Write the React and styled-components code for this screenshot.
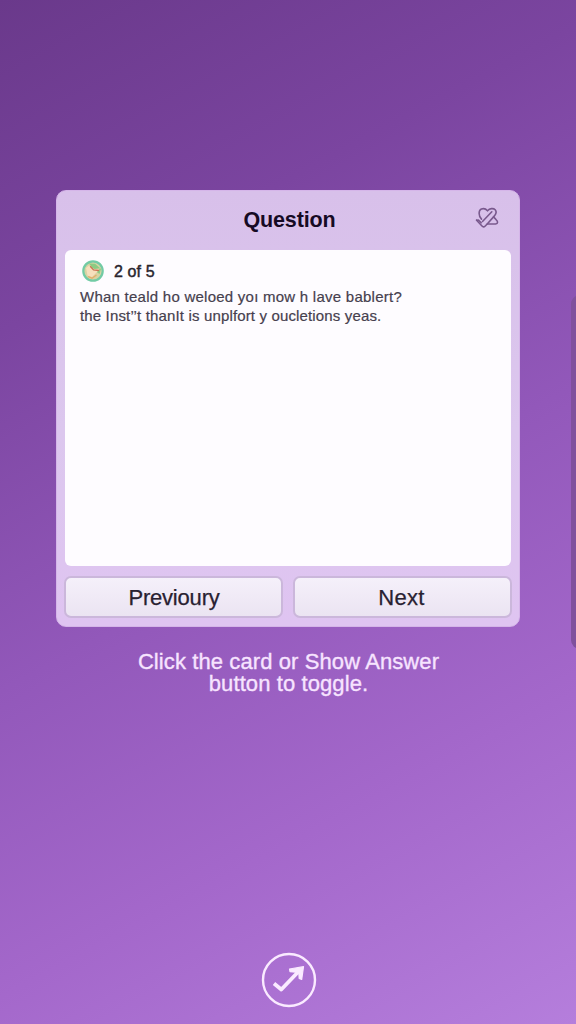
import React from 'react';
import styled, { createGlobalStyle } from 'styled-components';

const GlobalStyle = createGlobalStyle`
  * { box-sizing: border-box; }
  body { margin: 0; }
`;

const Page = styled.main`
  position: relative;
  display: flex;
  flex-direction: column;
  align-items: center;
  width: 100%;
  height: 1024px;
  padding: 190px 56px 16px;
  overflow: hidden;
  font-family: 'Liberation Sans', Arial, sans-serif;
  background: linear-gradient(152deg, #6a398b 0%, #7b45a0 25%, #9258ba 52%, #a468cb 75%, #b57edc 100%);
`;

const Card = styled.section`
  display: flex;
  flex-direction: column;
  width: 464px;
  height: 437px;
  padding: 0 7px 8px;
  border: 1px solid #d5b5e9;
  border-radius: 10px;
  background: linear-gradient(180deg, #d8c0ea 0%, #dcc7ee 55%, #dfc4f1 100%);
`;

const CardHeader = styled.header`
  display: grid;
  grid-template-columns: 32px 1fr 32px;
  align-items: center;
  height: 59px;
`;

const Title = styled.h1`
  grid-column: 2;
  margin: 0 0 0 3px;
  text-align: center;
  font-size: 21.5px;
  font-weight: 700;
  letter-spacing: -0.15px;
  color: #160a24;
`;

const IconButton = styled.button`
  display: flex;
  width: 24px;
  height: 24px;
  padding: 0;
  margin-top: -4px;
  margin-left: -5px;
  border: 0;
  background: none;
  color: #79598d;
`;

const QuestionPanel = styled.div`
  height: 317px;
  margin: 0 1px;
  padding: 8px 15px;
  border-radius: 6px;
  background: #fefcff;
`;

const Progress = styled.div`
  display: flex;
  align-items: center;
  gap: 10px;
  height: 26px;
  padding-left: 2px;
  font-size: 16px;
  letter-spacing: 0.1px;
  color: #29252e;
  -webkit-text-stroke: 0.45px currentColor;
`;

const Count = styled.span`
  padding-top: 2px;
`;

const QuestionText = styled.p`
  margin: 3px 0 0;
  font-size: 15px;
  line-height: 19px;
  color: #46404e;
  -webkit-text-stroke: 0.2px currentColor;
`;

const Line = styled.span`
  display: block;
  white-space: nowrap;
  letter-spacing: ${({ $tracking }) => $tracking}px;
`;

const Actions = styled.footer`
  display: flex;
  gap: 10px;
  margin-top: 10px;
`;

const ActionButton = styled.button`
  flex: 1;
  height: 42px;
  padding: 2px 0 0 1px;
  border: 2px solid #cbb7db;
  border-radius: 7px;
  background: linear-gradient(180deg, #f5f0fa, #ebe4f2);
  font-family: inherit;
  font-size: 22px;
  letter-spacing: ${({ $tracking = 0 }) => $tracking}px;
  text-indent: ${({ $shift = 0 }) => $shift}px;
  color: #282131;
  -webkit-text-stroke: 0.25px currentColor;
`;

const Hint = styled.p`
  margin: 24px 0 0 1px;
  text-align: center;
  font-size: 22px;
  line-height: 22px;
  letter-spacing: 0.1px;
  color: #f7e4ff;
  -webkit-text-stroke: 0.35px currentColor;
`;

const ToggleButton = styled.button`
  display: flex;
  width: 56px;
  height: 56px;
  margin: auto 0 0 2px;
  padding: 0;
  border: 0;
  background: none;
  color: #faeaff;
`;

const SideDrawer = styled.aside`
  position: absolute;
  top: 295px;
  right: -20px;
  width: 25px;
  height: 354px;
  border-radius: 9px;
  background: #80509d;
`;

const HeartPencilIcon = () => (
  <svg width="24" height="24" viewBox="0 0 24 24" fill="none" stroke="currentColor" strokeWidth="1.6" strokeLinecap="round" strokeLinejoin="round">
    <path d="M6.5 13.2C3.5 10.4 3.2 4.4 6.4 3.1C9.3 1.9 11.2 3.3 12.5 4.8C14.8 2.3 18.3 1.9 20.2 3.8C22.2 6.2 20.6 8.7 19 10.4L12.2 18" />
    <path d="M7.5 15.5L16.8 5.8" />
    <path d="M1.6 14.2L7 20Q8.5 21.7 10 20.2L12.2 18H20.5C23.4 17.5 22.8 15 21.2 13.8L18.6 10.9" />
    <path d="M1.6 14.2L3.4 14L6.2 16.8" />
  </svg>
);

const Badge = () => (
  <svg width="22" height="22" viewBox="0 0 22 22">
    <circle cx="11" cy="11" r="9.7" fill="#d8d3a3" stroke="#72cba5" strokeWidth="2.2" />
    <path d="M7 3.5L13 3.8L19 9L17.5 14L12 10Z" fill="#8ccb83" />
    <path d="M4 8L7 5.5L10 8L12.5 9L18 8.5L14.5 12.5L10 17L5.5 15.5Z" fill="#f7dfbd" />
    <path d="M8.2 6.2L11.5 10L17 10.5" fill="none" stroke="#ca7353" strokeWidth="1.3" />
    <path d="M6 16.5L10 18.2L14.5 15" fill="none" stroke="#e5ad6a" strokeWidth="1.3" />
  </svg>
);

const CheckArrowIcon = () => (
  <svg width="56" height="56" viewBox="0 0 56 56" fill="none" stroke="currentColor">
    <circle cx="28" cy="28" r="26" strokeWidth="2.4" />
    <path d="M13 31.5L20.3 37.5L39 18" strokeWidth="3.8" strokeLinejoin="round" />
    <path d="M28.5 17L42.5 14.7L40.7 27.5L38.2 26.5L37.8 20.5L29 19.7Z" fill="currentColor" strokeWidth="1.2" strokeLinejoin="round" />
  </svg>
);

export default function App() {
  return (
    <>
      <GlobalStyle />
      <Page>
        <Card>
          <CardHeader>
            <Title>Question</Title>
            <IconButton aria-label="Edit favorites"><HeartPencilIcon /></IconButton>
          </CardHeader>
          <QuestionPanel>
            <Progress><Badge /><Count>2 of 5</Count></Progress>
            <QuestionText>
              <Line $tracking={0.25}>Whan teald ho weloed yoı mow h lave bablert?</Line>
              <Line $tracking={0.15}>the Inst’’t thanIt is unplfort y oucletions yeas.</Line>
            </QuestionText>
          </QuestionPanel>
          <Actions>
            <ActionButton $tracking={-0.2}>Previoury</ActionButton>
            <ActionButton $tracking={0.3} $shift={-3}>Next</ActionButton>
          </Actions>
        </Card>
        <Hint>Click the card or Show Answer<br />button to toggle.</Hint>
        <ToggleButton aria-label="Toggle answer"><CheckArrowIcon /></ToggleButton>
        <SideDrawer />
      </Page>
    </>
  );
}
